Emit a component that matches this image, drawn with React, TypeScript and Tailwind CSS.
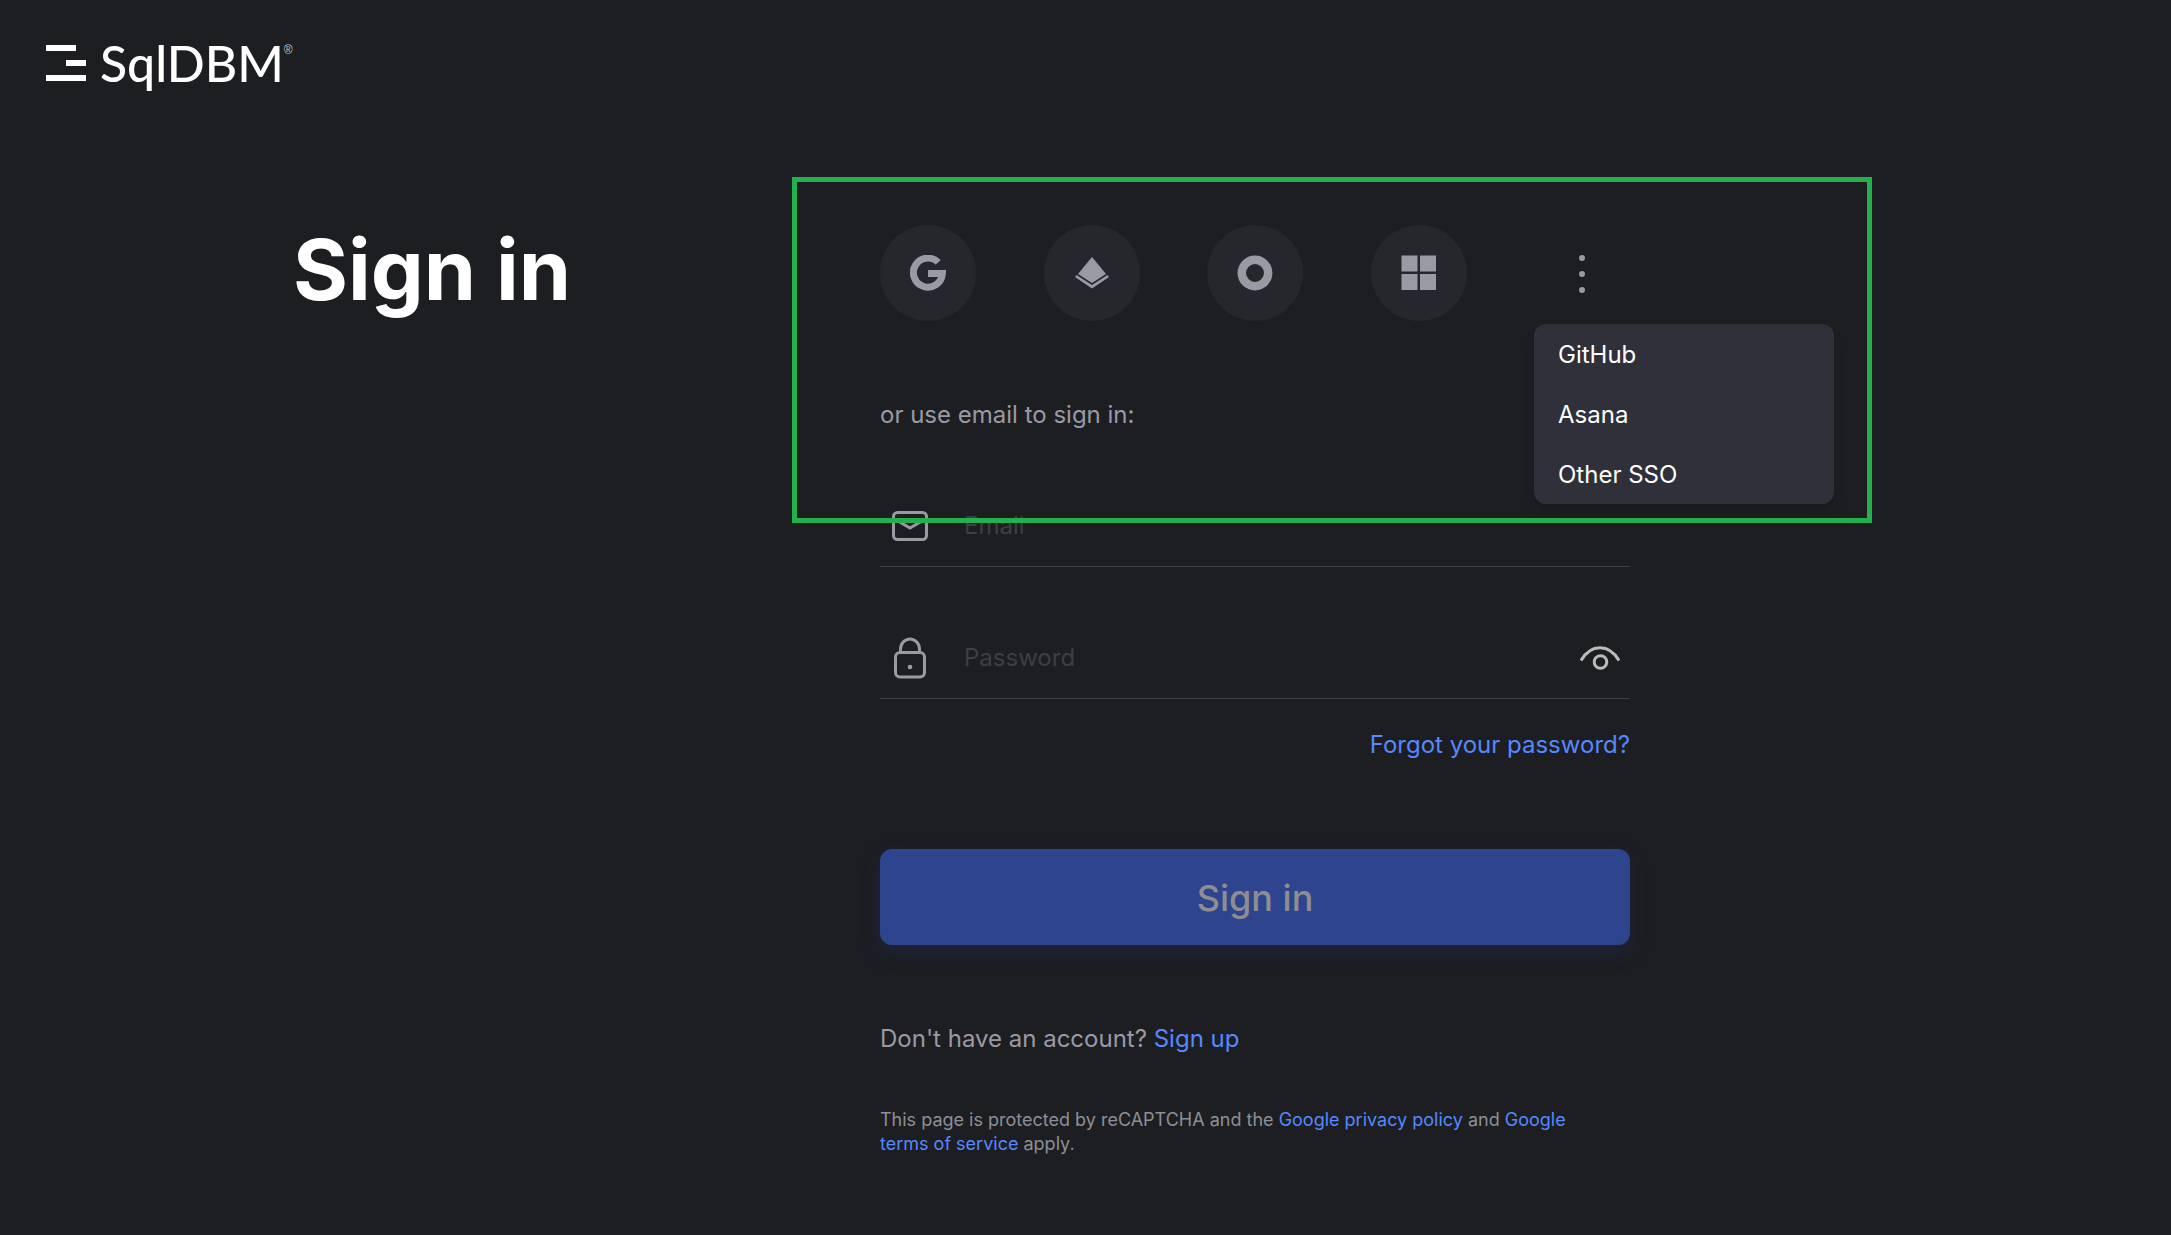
import { useState } from 'react'

const ssoProviders = ['GitHub', 'Asana', 'Other SSO']

function Logo() {
  return (
    <a href="#" className="inline-flex items-start text-white">
      <svg width="40" height="36" viewBox="0 0 40 36" fill="currentColor" className="mt-[5px]" aria-hidden="true">
        <path d="M0 0h30v6H0zM20 15h20v6H20zM0 30h40v6H0z" />
      </svg>
      <span className="ml-[14px] font-['Lato',sans-serif] text-[50px] leading-[46px] font-medium">SqlDBM</span>
      <span className="font-['Liberation_Sans',sans-serif] text-xs leading-5 text-[#c8c8ca]">®</span>
    </a>
  )
}

function GoogleIcon() {
  return (
    <svg width="36" height="36" viewBox="0 0 36 36" fill="none" stroke="currentColor" aria-hidden="true">
      <path d="M28.2 7.4A14.5 14.5 0 1 0 32.4 18.5H18" strokeWidth="7" />
    </svg>
  )
}

function AzureIcon() {
  return (
    <svg width="34" height="32" viewBox="0 0 34 32" fill="currentColor" aria-hidden="true">
      <path d="M17 0l14 17-14 9L3 17z" />
      <path d="M1.5 18L17 28l15.5-10L34 20 17 31.5 0 20z" />
    </svg>
  )
}

function OktaIcon() {
  return (
    <svg width="36" height="36" viewBox="0 0 36 36" fill="none" stroke="currentColor" strokeWidth="8.5" aria-hidden="true">
      <circle cx="18" cy="18" r="13.2" />
    </svg>
  )
}

function MicrosoftIcon() {
  return (
    <svg width="36" height="36" viewBox="0 0 36 36" fill="currentColor" aria-hidden="true">
      <path d="M.5.5h16v16H.5zM19 .5h16v16H19zM.5 19h16v16H.5zM19 19h16v16H19z" />
    </svg>
  )
}

function DotsIcon() {
  return (
    <svg width="8" height="40" viewBox="0 0 8 40" fill="currentColor" aria-hidden="true">
      <circle cx="4" cy="5" r="3" />
      <circle cx="4" cy="21" r="3" />
      <circle cx="4" cy="37" r="3" />
    </svg>
  )
}

function MailIcon() {
  return (
    <svg width="36" height="30" viewBox="0 0 36 30" fill="none" stroke="currentColor" strokeWidth="3" aria-hidden="true">
      <rect x="1.5" y="1.5" width="33" height="27" rx="4" />
      <path d="M6 10l12 7 12-7" />
    </svg>
  )
}

function LockIcon() {
  return (
    <svg width="32" height="42" viewBox="0 0 32 42" fill="none" stroke="currentColor" strokeWidth="3" aria-hidden="true">
      <rect x="1.5" y="15.5" width="29" height="24.5" rx="4.5" />
      <path d="M6.5 15v-2.500a9.500 10.500 0 0 1 19 0V15" />
      <circle cx="16" cy="30" r="2.3" fill="currentColor" stroke="none" />
    </svg>
  )
}

function EyeIcon() {
  return (
    <svg width="40" height="24" viewBox="0 0 40 24" fill="none" stroke="currentColor" strokeWidth="3" aria-hidden="true">
      <path d="M1 14.500C11-2.500 29-2.500 39 14.500" />
      <circle cx="20.5" cy="16" r="6.3" />
    </svg>
  )
}

const socials = [
  { name: 'Google', icon: <GoogleIcon /> },
  { name: 'Azure', icon: <AzureIcon /> },
  { name: 'Okta', icon: <OktaIcon /> },
  { name: 'Microsoft', icon: <MicrosoftIcon /> },
]

export default function App() {
  const [menuOpen, setMenuOpen] = useState(true)
  const [showPassword, setShowPassword] = useState(false)

  return (
    <div className="min-h-screen bg-[#1d1e22] font-['Inter',sans-serif] text-2xl leading-8 text-[#9a9aa4]">
      <header className="flex h-[185px] items-start px-[46px] pt-10">
        <Logo />
      </header>

      <main className="mx-auto flex max-w-[1585px] items-start pt-10 pb-20">
        <h1 className="w-[587px] shrink-0 text-[84px] leading-[90px] font-bold text-white">Sign in</h1>

        <form className="relative w-full max-w-[750px]">
          <div className="flex justify-between">
            {socials.map((social) => (
              <button
                key={social.name}
                type="button"
                aria-label={social.name}
                className="flex size-24 items-center justify-center rounded-full bg-[#26272c]"
              >
                {social.icon}
              </button>
            ))}
            <div className="relative">
              <button
                type="button"
                aria-label="More options"
                onClick={() => setMenuOpen(!menuOpen)}
                className="flex size-24 items-center justify-center"
              >
                <DotsIcon />
              </button>
              {menuOpen && (
                <ul className="absolute top-full left-0 z-10 mt-[3px] w-[300px] rounded-xl bg-[#30303a] text-white shadow-lg">
                  {ssoProviders.map((name) => (
                    <li key={name}>
                      <button type="button" className="h-[60px] w-full px-6 pt-[2px] text-left">
                        {name}
                      </button>
                    </li>
                  ))}
                </ul>
              )}
            </div>
          </div>

          <p className="mt-[78px]">or use email to sign in:</p>

          <div className="mt-[54px] flex h-[82px] items-center border-b border-[#3f4045]">
            <label htmlFor="email" className="flex w-[84px] pl-3">
              <MailIcon />
            </label>
            <input
              id="email"
              type="email"
              aria-label="Email"
              placeholder="Email"
              className="min-w-0 flex-1 bg-transparent outline-none placeholder:text-[#3c3f45]"
            />
          </div>

          <div className="mt-[50px] flex h-[82px] items-center border-b border-[#3f4045]">
            <label htmlFor="password" className="flex w-[84px] pl-[14px]">
              <LockIcon />
            </label>
            <input
              id="password"
              type={showPassword ? 'text' : 'password'}
              aria-label="Password"
              placeholder="Password"
              className="min-w-0 flex-1 bg-transparent outline-none placeholder:text-[#3c3f45]"
            />
            <button
              type="button"
              aria-label="Show password"
              onClick={() => setShowPassword(!showPassword)}
              className="pr-[10px] text-[#bbbbbd]"
            >
              <EyeIcon />
            </button>
          </div>

          <div className="mt-[30px] text-right">
            <a href="#" className="text-[#5688ff]">Forgot your password?</a>
          </div>

          <button
            type="submit"
            disabled
            className="mt-[88px] h-24 w-full rounded-xl bg-[#2e448f] pt-[2px] text-4xl font-medium text-[#8e8e90] shadow-[0_8px_20px_rgba(32,60,150,0.22)]"
          >
            Sign in
          </button>

          <p className="mt-[78px]">
            Don't have an account? <a href="#" className="text-[#5688ff]">Sign up</a>
          </p>

          <p className="mt-[53px] pr-10 text-lg leading-6 text-[#8e8e96]">
            This page is protected by reCAPTCHA and the <a href="#" className="text-[#5688ff]">Google privacy policy</a> and{' '}
            <a href="#" className="text-[#5688ff]">Google terms of service</a> apply.
          </p>

          {/* highlight around the social sign-in area */}
          <div className="pointer-events-none absolute -top-12 -left-[88px] h-[346px] w-[1080px] border-[5px] border-[#22b14c]" />
        </form>
      </main>
    </div>
  )
}
